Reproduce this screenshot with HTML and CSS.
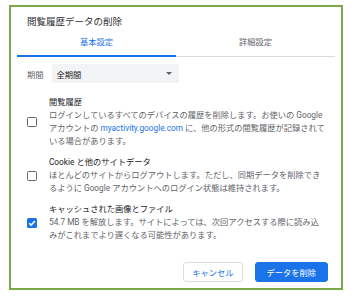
FILE: index.html
```html
<!DOCTYPE html>
<html lang="ja">
<head>
  <meta charset="UTF-8">
  <meta name="viewport" content="width=device-width, initial-scale=1.0">
  <title>閲覧履歴データの削除</title>
  <link rel="stylesheet" href="styles.css">
</head>
<body>
  <div class="dialog">
    <div class="dialog-title">閲覧履歴データの削除</div>

    <div class="tabs">
      <div class="tab active">基本設定</div>
      <div class="tab">詳細設定</div>
    </div>

    <div class="period">
      <span class="period-label">期間</span>
      <div class="select">
        <span>全期間</span>
        <span class="arrow"></span>
      </div>
    </div>

    <div class="items">
      <div class="item">
        <span class="checkbox"></span>
        <div class="item-text">
          <div class="item-title">閲覧履歴</div>
          <div class="item-desc">ログインしているすべてのデバイスの履歴を削除します。お使いの Google<br>アカウントの <span class="link">myactivity.google.com</span> に、他の形式の閲覧履歴が記録されて<br>いる場合があります。</div>
        </div>
      </div>
      <div class="item">
        <span class="checkbox"></span>
        <div class="item-text">
          <div class="item-title">Cookie と他のサイトデータ</div>
          <div class="item-desc">ほとんどのサイトからログアウトします。ただし、同期データを削除でき<br>るように Google アカウントへのログイン状態は維持されます。</div>
        </div>
      </div>
      <div class="item">
        <span class="checkbox checked">
          <svg viewBox="0 0 10 10" width="10" height="10"><path d="M2.2 5.2 L4.2 7.1 L7.9 3" fill="none" stroke="#fff" stroke-width="1.5"/></svg>
        </span>
        <div class="item-text">
          <div class="item-title">キャッシュされた画像とファイル</div>
          <div class="item-desc">54.7 MB を解放します。サイトによっては、次回アクセスする際に読み込<br>みがこれまでより遅くなる可能性があります。</div>
        </div>
      </div>
    </div>

    <div class="actions">
      <button class="btn-cancel">キャンセル</button>
      <button class="btn-delete">データを削除</button>
    </div>
  </div>
</body>
</html>
```

FILE: styles.css
```css
body {
  font-family: Roboto, "Noto Sans CJK JP", sans-serif;
  margin: 0;
  padding: 5px 0 0 9px;
  background-color: #ffffff;
  color: #202124;
}
.dialog {
  box-sizing: border-box;
  width: 334px;
  height: 285px;
  border: 2px solid #7aaa48;
  background-color: #ffffff;
}
.dialog-title {
  padding: 8px 0 0 16px;
  font-size: 9.5px;
  line-height: 14px;
  color: #303134;
}
.tabs {
  display: flex;
  margin: 0 6px;
  border-bottom: 1px solid #dadce0;
}
.tab {
  flex: 1;
  text-align: center;
  padding: 7px 0 6px;
  font-size: 8.25px;
  line-height: 13px;
  color: #5f6368;
  border-bottom: 2px solid transparent;
  margin-bottom: -1px;
}
.tab.active {
  color: #1a73e8;
  border-bottom-color: #1a73e8;
}
.period {
  display: flex;
  align-items: center;
  gap: 8px;
  margin-top: 7px;
  padding-left: 16px;
  font-size: 8.25px;
}
.period-label {
  color: #5f6368;
}
.select {
  display: flex;
  align-items: center;
  justify-content: space-between;
  width: 127px;
  height: 19px;
  box-sizing: border-box;
  padding: 0 7px 0 5px;
  background-color: #f1f3f4;
  color: #202124;
}
.arrow {
  width: 0;
  height: 0;
  border-left: 3px solid transparent;
  border-right: 3px solid transparent;
  border-top: 3px solid #5f6368;
}
.items {
  display: flex;
  flex-direction: column;
  gap: 8px;
  margin-top: 13px;
  padding-left: 16px;
}
.item {
  display: flex;
  align-items: center;
  gap: 12px;
}
.checkbox {
  flex: none;
  box-sizing: border-box;
  width: 10px;
  height: 10px;
  border: 1.5px solid #5f6368;
  border-radius: 1.5px;
}
.checkbox.checked {
  border: none;
  background-color: #1a73e8;
}
.checkbox svg {
  display: block;
}
.item-text {
  font-size: 8.25px;
  line-height: 13px;
  white-space: nowrap;
}
.item-title {
  color: #202124;
}
.item-desc {
  color: #5f6368;
}
.link {
  color: #1a73e8;
}
.actions {
  display: flex;
  justify-content: flex-end;
  gap: 12px;
  margin-top: 20px;
  padding-right: 13px;
}
.actions button {
  font-family: Roboto, "Noto Sans CJK JP", sans-serif;
  font-size: 8.25px;
  height: 20px;
  border-radius: 3px;
  cursor: pointer;
}
.btn-cancel {
  padding: 0 8px;
  background-color: #ffffff;
  color: #1a73e8;
  border: 1px solid #dadce0;
}
.btn-delete {
  padding: 0 11px;
  background-color: #1a73e8;
  color: #ffffff;
  border: 1px solid #1a73e8;
}
```
